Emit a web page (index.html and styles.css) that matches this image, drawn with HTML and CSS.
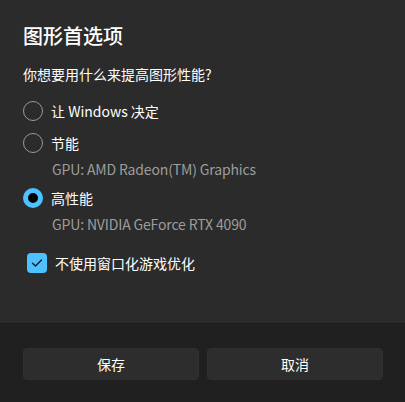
FILE: index.html
```html
<!DOCTYPE html>
<html lang="zh-CN">
<head>
<meta charset="utf-8">
<link rel="stylesheet" href="styles.css">
</head>
<body>
<div class="dialog">
  <div class="content">
    <h1 class="title">图形首选项</h1>
    <p class="question">你想要用什么来提高图形性能?</p>
    <div class="options">
      <label class="option">
        <span class="radio"></span>
        <span class="label">让 Windows 决定</span>
      </label>
      <label class="option">
        <span class="radio"></span>
        <span class="label">节能</span>
      </label>
      <div class="sub">GPU: AMD Radeon(TM) Graphics</div>
      <label class="option">
        <span class="radio checked"></span>
        <span class="label">高性能</span>
      </label>
      <div class="sub">GPU: NVIDIA GeForce RTX 4090</div>
    </div>
    <label class="check-row">
      <span class="checkbox">
        <svg width="12" height="10" viewBox="0 0 12 10"><path d="M1.5 5.2 L4.5 8 L10.5 2" fill="none" stroke="#1a1a1a" stroke-width="1.4" stroke-linecap="round" stroke-linejoin="round"/></svg>
      </span>
      <span class="label">不使用窗口化游戏优化</span>
    </label>
  </div>
  <div class="footer">
    <button class="btn">保存</button>
    <button class="btn">取消</button>
  </div>
</div>
</body>
</html>
```
FILE: styles.css
```css
html, body {
  margin: 0;
  padding: 0;
  background: #2b2b2b;
  font-family: "Noto Sans CJK SC", "Noto Sans", sans-serif;
  color: #ffffff;
}
.dialog {
  width: 405px;
  height: 402px;
  display: flex;
  flex-direction: column;
}
.content {
  flex: 1;
  padding: 23px 23px 0 23px;
  background: #2b2b2b;
}
.title {
  margin: 0;
  font-size: 20px;
  font-weight: 500;
  line-height: 26px;
}
.question {
  margin: 15px 0 0 0;
  font-size: 14px;
  line-height: 20px;
}
.options {
  margin-top: 11px;
  display: flex;
  flex-direction: column;
}
.option {
  display: flex;
  align-items: center;
  gap: 8px;
  height: 32px;
  font-size: 14px;
}
.radio {
  width: 20px;
  height: 20px;
  box-sizing: border-box;
  border: 1px solid #9a9a9a;
  border-radius: 50%;
}
.radio.checked {
  border: 5px solid #4cc2ff;
  background: #000;
}
.sub {
  margin-left: 29px;
  font-size: 14px;
  color: #9d9d9d;
  line-height: 20px;
  margin-bottom: 3px;
  letter-spacing: -0.15px;
}
.check-row {
  display: flex;
  align-items: center;
  gap: 8px;
  margin-top: 16px;
  margin-left: 4px;
  font-size: 14px;
  line-height: 20px;
}
.checkbox {
  width: 20px;
  height: 20px;
  border-radius: 4px;
  background: #4cc2ff;
  display: flex;
  align-items: center;
  justify-content: center;
}
.footer {
  height: 79px;
  box-sizing: border-box;
  background: #202020;
  border-top: 1px solid #1c1c1c;
  display: flex;
  gap: 8px;
  padding: 24px 22px 0 23px;
}
.btn {
  flex: 1;
  height: 32px;
  background: #2d2d2d;
  border: 1px solid #303030;
  border-radius: 4px;
  color: #ffffff;
  font-family: "Noto Sans CJK SC", sans-serif;
  font-size: 14px;
}
```
